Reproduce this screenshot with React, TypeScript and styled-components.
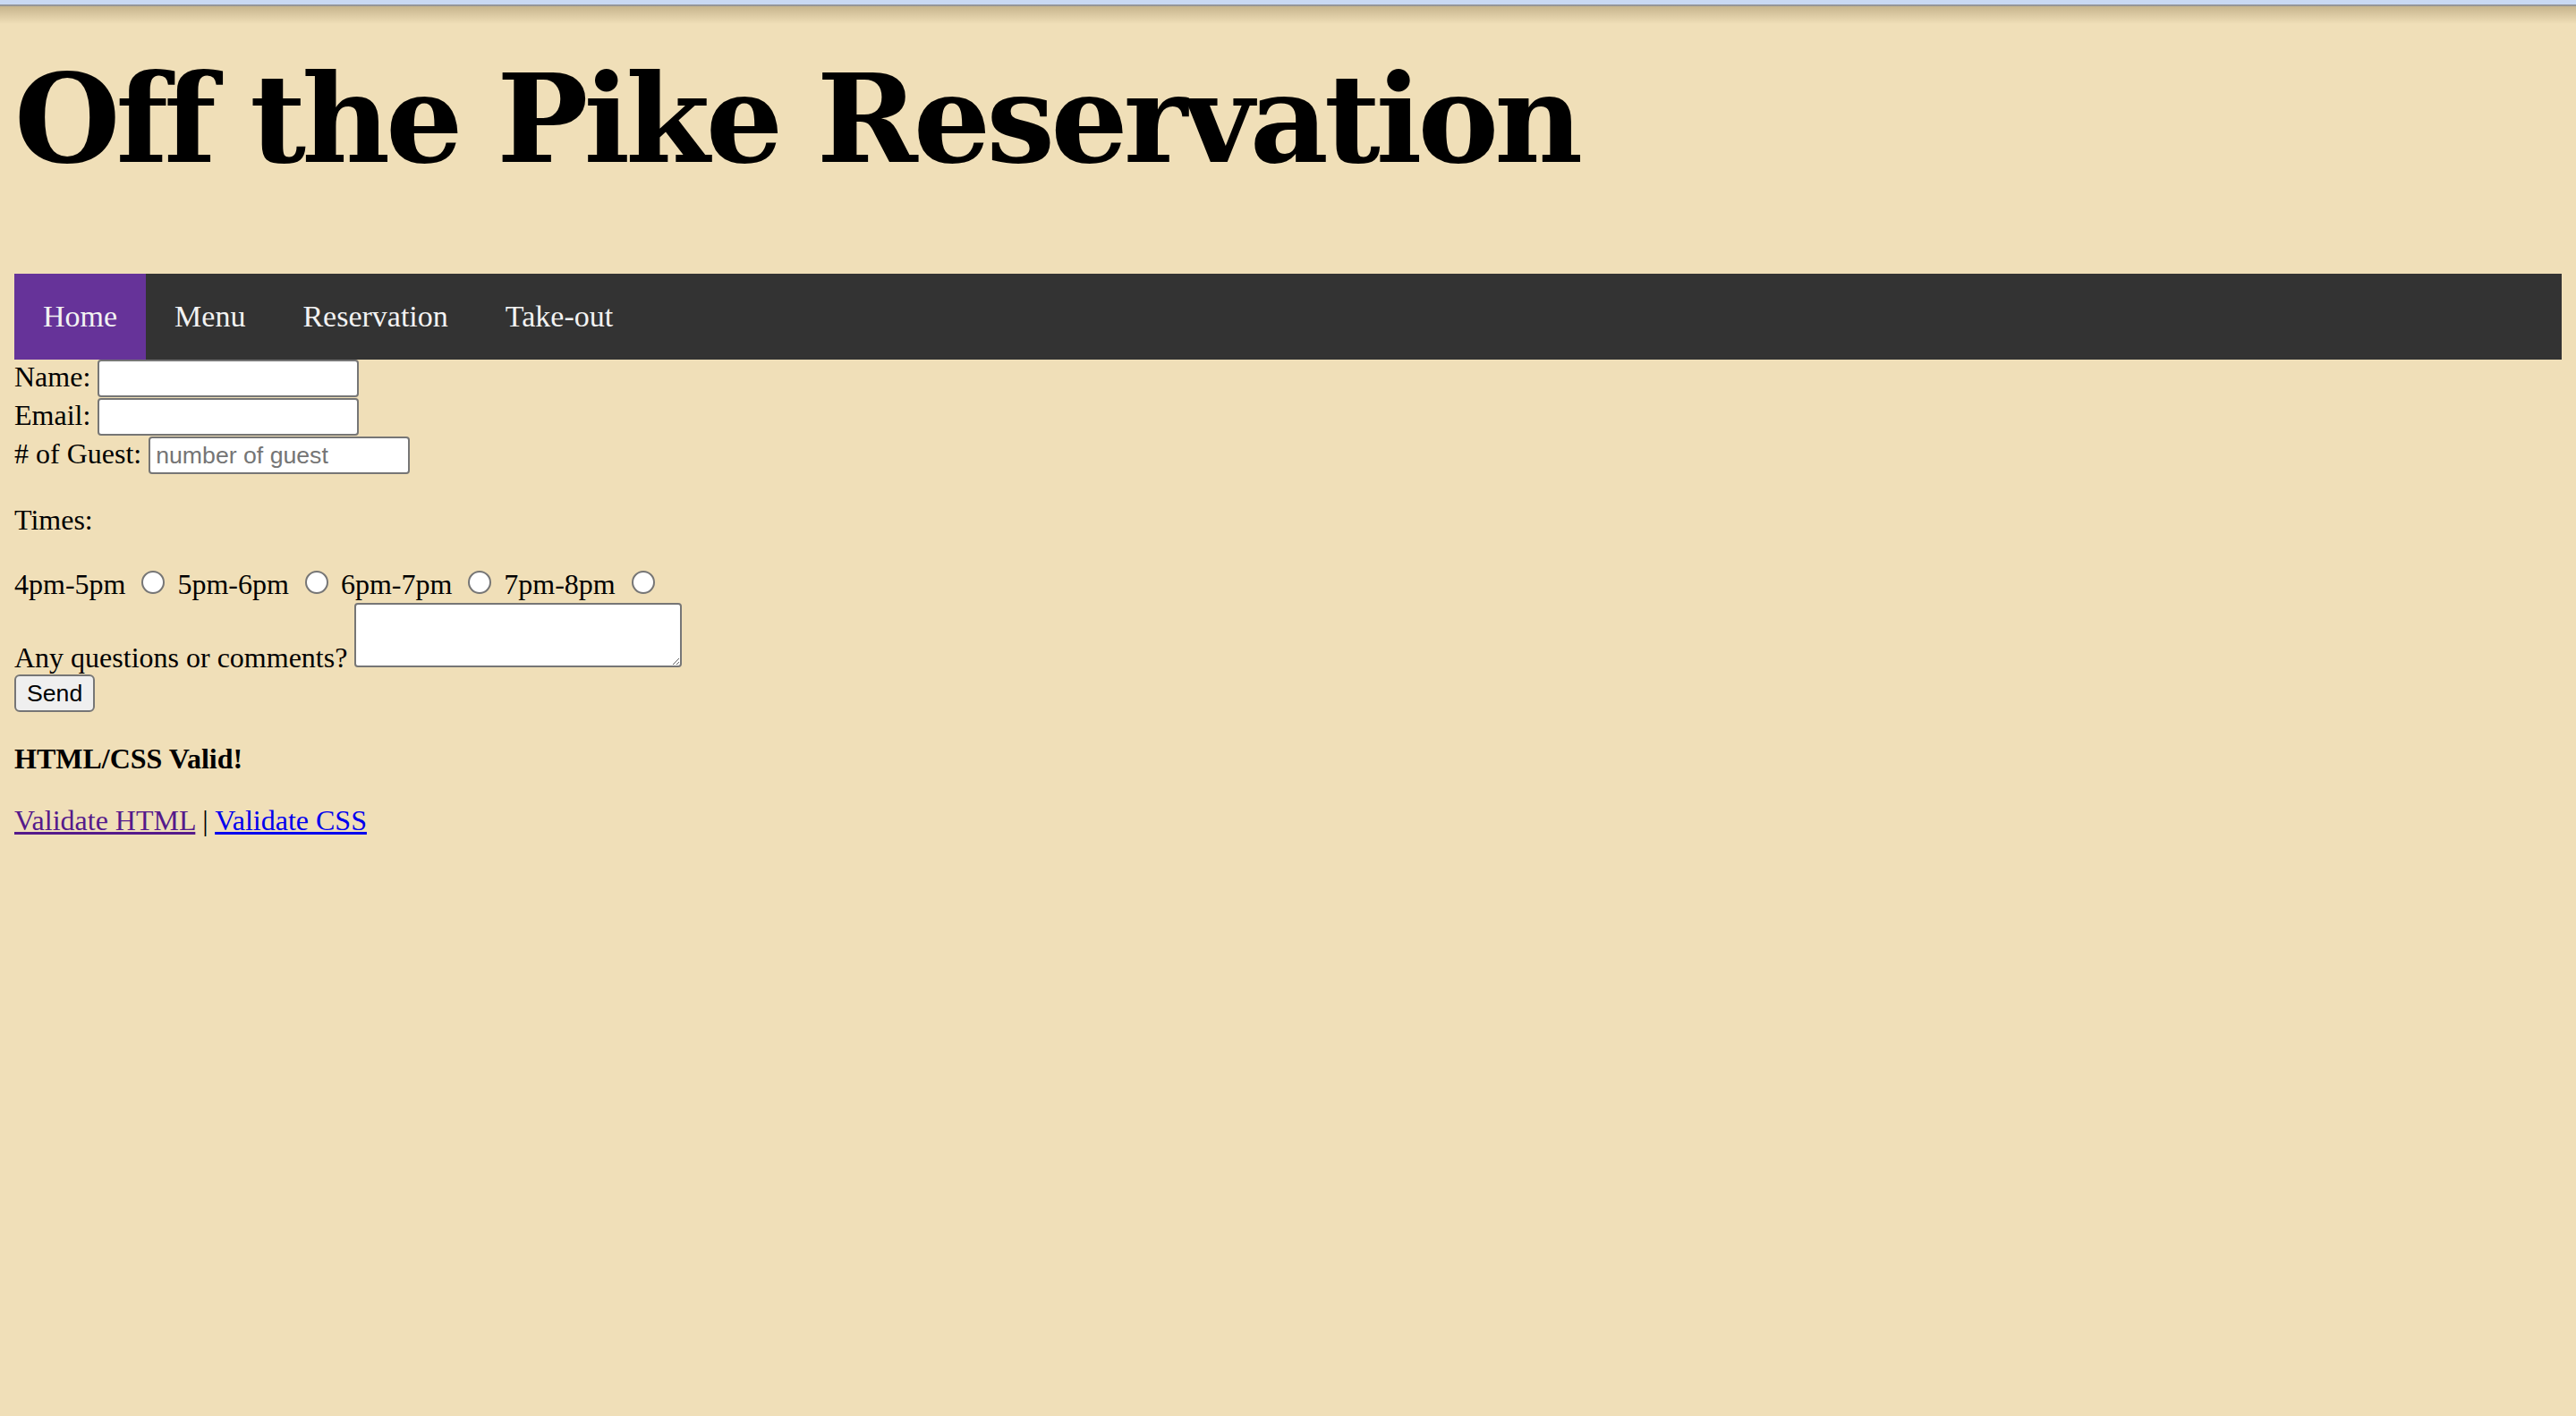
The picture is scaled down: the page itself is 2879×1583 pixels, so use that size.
import React from "react";
import styled, { createGlobalStyle } from "styled-components";

const GlobalStyle = createGlobalStyle`
  html, body {
    margin: 0;
    background: #f0dfb8;
  }
`;

// the reference was taken at 2x, so the page is laid out at 1x and zoomed
const Page = styled.div`
  zoom: 2;
  padding: 0 8px;
  font-family: "Liberation Serif", "Times New Roman", serif;
  font-size: 16px;
  color: #000;
`;

const TopStrip = styled.div`
  position: relative;
  height: 2.5px;
  margin: 0 -8px;
  background: #c9d9f3;
  border-bottom: 1px solid #a9b4cb;

  &::after {
    content: "";
    position: absolute;
    left: 0;
    right: 0;
    top: 100%;
    height: 11px;
    background: linear-gradient(rgba(110, 90, 50, 0.35), rgba(110, 90, 50, 0));
  }
`;

const Title = styled.h1`
  margin: 29px 0 52.5px;
  font-family: "DejaVu Serif", Georgia, serif;
  font-weight: bold;
  font-size: 68px;
  line-height: 68px;
  letter-spacing: -2.45px;
`;

const NavBar = styled.nav`
  display: flex;
  background: #333;
`;

const NavLink = styled.a<{ $active?: boolean }>`
  padding: 14px 16px;
  font-size: 17px;
  line-height: 20px;
  color: #f2f2f2;
  text-decoration: none;
  background: ${(p) => (p.$active ? "#663399" : "transparent")};
`;

const Form = styled.form`
  margin: 0;
`;

const TextField = styled.input`
  box-sizing: border-box;
  width: 146px;
  height: 21px;
  margin: 0 0 0.5px;
  padding: 1px 3px;
  border: 1px solid #767676;
  border-radius: 2px;
  background: #fff;
  font: 13.333px "Liberation Sans", Arial, sans-serif;

  &::placeholder {
    color: #757575;
  }
`;

const Radio = styled.input`
  appearance: none;
  box-sizing: border-box;
  width: 13px;
  height: 13px;
  margin: 3px 3px 0 5px;
  border: 1px solid #767676;
  border-radius: 50%;
  background: #fff;
`;

const Comments = styled.textarea`
  box-sizing: border-box;
  width: 183px;
  height: 36px;
  margin: 1px 0 0;
  padding: 2px;
  border: 1px solid #767676;
  border-radius: 2px;
  background: #fff;
  vertical-align: baseline;
  font: 13.333px "Liberation Mono", monospace;
`;

const SendButton = styled.button`
  box-sizing: border-box;
  height: 21px;
  margin: 0 0 0.75px;
  padding: 1px 6px;
  border: 1px solid #767676;
  border-radius: 3px;
  background: #efefef;
  color: #000;
  font: 13.333px "Liberation Sans", Arial, sans-serif;
`;

const Paragraph = styled.p`
  margin: 16px 0;
`;

const Link = styled.a<{ $visited?: boolean }>`
  color: ${(p) => (p.$visited ? "#551a8b" : "#0000ee")};
  text-decoration: underline;
`;

const times = ["4pm-5pm", "5pm-6pm", "6pm-7pm", "7pm-8pm"];

export default function App() {
  return (
    <>
      <GlobalStyle />
      <Page>
        <TopStrip />
        <Title>Off the Pike Reservation</Title>
        <NavBar>
          <NavLink $active href="#">Home</NavLink>
          <NavLink href="#">Menu</NavLink>
          <NavLink href="#">Reservation</NavLink>
          <NavLink href="#">Take-out</NavLink>
        </NavBar>
        <Form onSubmit={(e) => e.preventDefault()}>
          Name: <TextField type="text" />
          <br />
          Email: <TextField type="email" />
          <br />
          # of Guest: <TextField type="number" placeholder="number of guest" />
          <br />
          <Paragraph>Times:</Paragraph>
          {times.map((t) => (
            <React.Fragment key={t}>
              {t} <Radio type="radio" name="time" value={t} />{" "}
            </React.Fragment>
          ))}
          <br />
          Any questions or comments? <Comments />
          <br />
          <SendButton type="submit">Send</SendButton>
        </Form>
        <Paragraph>
          <b>HTML/CSS Valid!</b>
        </Paragraph>
        <Paragraph>
          <Link $visited href="#">Validate HTML</Link> | <Link href="#">Validate CSS</Link>
        </Paragraph>
      </Page>
    </>
  );
}
